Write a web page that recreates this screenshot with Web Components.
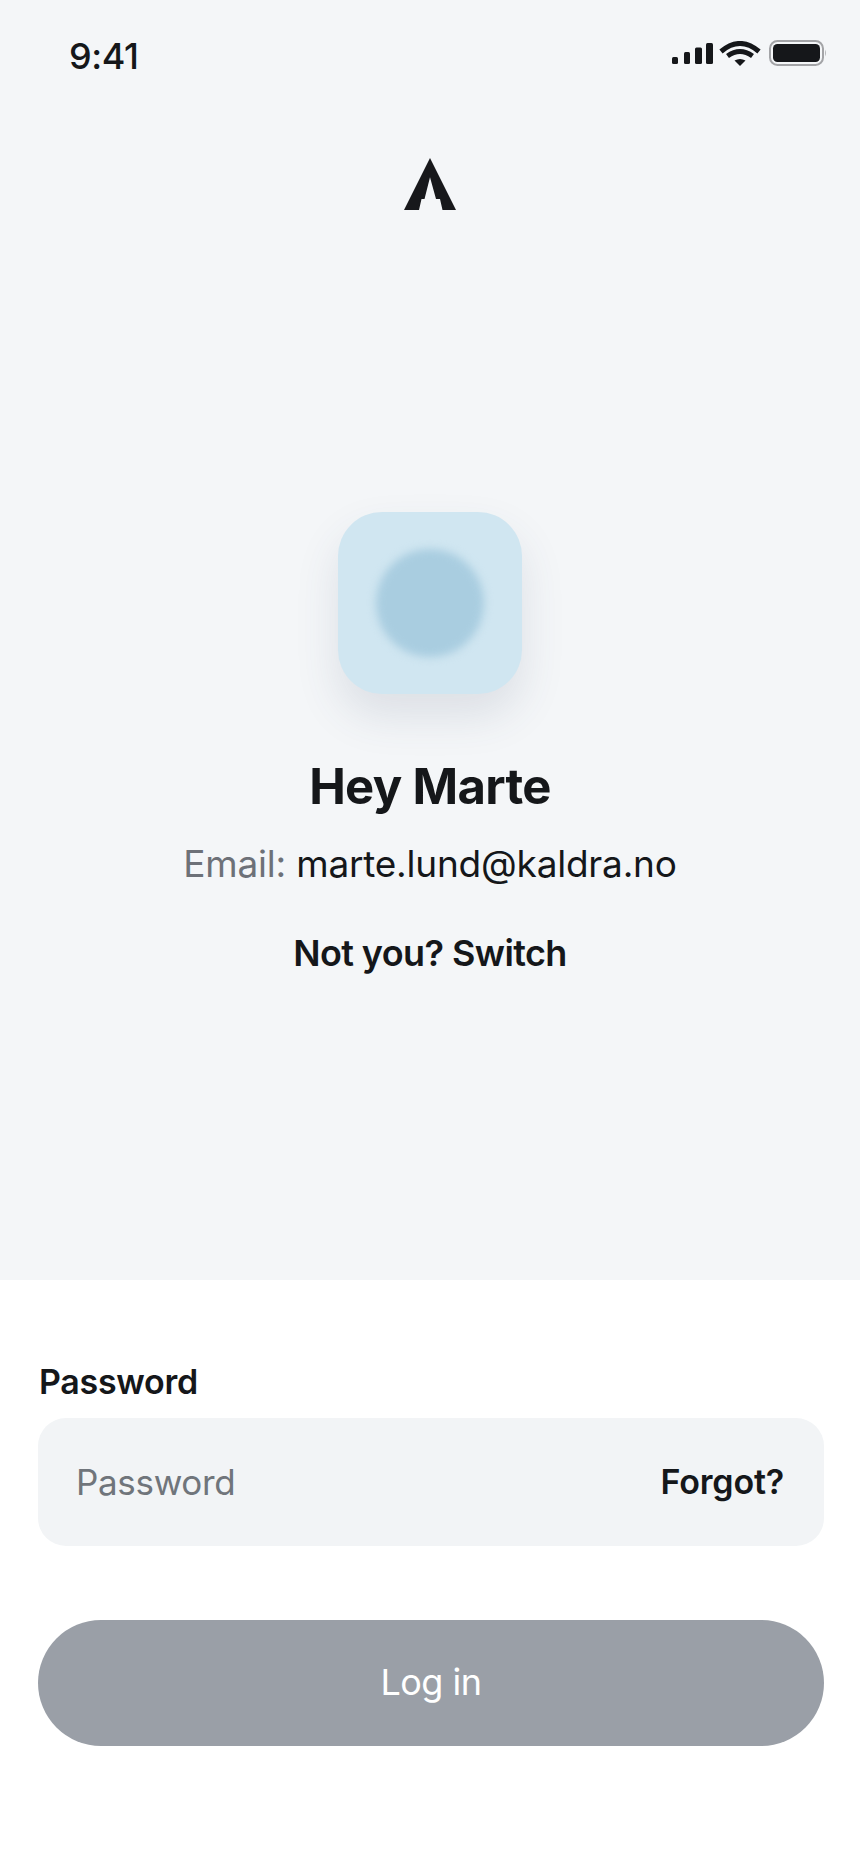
<!DOCTYPE html>
<html lang="en"><head><meta charset="utf-8"><title>Log in</title>
<style>
html,body{margin:0;padding:0;background:#fff}
body{font-family:Inter,"Noto Sans",sans-serif;color:#15171a}
</style></head><body>
<login-screen>
  <status-bar slot="top"></status-bar>
  <brand-mark slot="top"></brand-mark>
  <user-card slot="top" name="Hey Marte" email="marte.lund@kaldra.no"></user-card>
  <password-field slot="form"></password-field>
  <primary-button slot="form">Log in</primary-button>
</login-screen>
<script>
function def(name, html, init){
  customElements.define(name, class extends HTMLElement{
    constructor(){super();const t=document.createElement('template');t.innerHTML=html;this.attachShadow({mode:'open'}).appendChild(t.content.cloneNode(true));}
    connectedCallback(){ if(init) init(this,this.shadowRoot); }
  });
}
def('login-screen',`<style>
:host{display:flex;flex-direction:column;width:860px;height:1864px;overflow:hidden}
.top{height:1280px;background:#f4f6f8;display:flex;flex-direction:column;align-items:stretch;flex:none}
.form{flex:1;background:#fff;padding:0 36px 0 38px;display:flex;flex-direction:column}
</style><div class="top"><slot name="top"></slot></div><div class="form"><slot name="form"></slot></div>`);

def('status-bar',`<style>
:host{display:flex;justify-content:space-between;align-items:center;height:26px;padding:40px 33px 0 69px}
.t{font:500 36px/32px Inter,sans-serif;letter-spacing:-.4px;color:#15171a;margin-top:6px}
.i{display:flex;align-items:center}
svg{display:block}
.sig{margin-right:6px}.wifi{margin-right:8px}
</style><span class="t">9:41</span><span class="i">
<svg class="sig" width="41" height="21" viewBox="0 0 41 21" fill="#15171a"><rect x="0" y="14" width="6" height="7" rx="1.500"/><rect x="12" y="9" width="6" height="12" rx="1.500"/><rect x="23" y="4.500" width="7" height="16.500" rx="1.500"/><rect x="34" y="0" width="7" height="21" rx="1.500"/></svg>
<svg class="wifi" width="42" height="25" viewBox="0 0 42 25" fill="none"><path d="M2 10.500Q21-5.500 40 10.500" stroke="#15171a" stroke-width="5"/><path d="M8.500 15Q21 6 33.500 15" stroke="#15171a" stroke-width="5"/><path d="M15.500 19.500Q21 16.500 26.500 19.500L21 25Z" fill="#15171a"/></svg>
<svg width="58" height="26" viewBox="0 0 58 26"><rect x="1" y="1" width="53" height="24" rx="7.500" fill="none" stroke="#a3a4a7" stroke-width="2"/><rect x="4" y="4" width="47" height="18" rx="4.500" fill="#15171a"/><path d="M56 9.500q2 3.500 0 7z" fill="#b5b6b9"/></svg>
</span>`);

def('brand-mark',`<style>
:host{display:block;margin-top:92px;height:52px}
svg{display:block;margin:0 auto}
</style><svg width="52" height="52" viewBox="0 0 52 52"><path fill="#17181b" d="M26 0L52 52H38.500L36 41H32L26 19.300L20.500 41H17.500L15 52H0Z"/></svg>`);

def('user-card',`<style>
:host{display:flex;flex-direction:column;align-items:center;margin-top:302px;text-align:center}
.tile{width:184px;height:182px;border-radius:44px;background:#d0e6f1;box-shadow:0 22px 44px rgba(60,80,110,.13);display:flex;align-items:center;justify-content:center}
.dot{width:108px;height:108px;border-radius:50%;background:#a9cde0;filter:blur(4px)}
h1{margin:65px 0 0;font:700 49px/56px Inter,sans-serif;letter-spacing:-.67px;color:#15171a}
.mail{margin-top:27px;font:400 37px/44px Inter,sans-serif;letter-spacing:-.22px;color:#15171a}
.mail span{color:#6d7178}
.sw{margin-top:45px;font:600 36px/44px Inter,sans-serif;letter-spacing:-.6px;color:#15171a}
</style><div class="tile"><div class="dot"></div></div><h1></h1><div class="mail"><span>Email:</span> <b style="font-weight:400"></b></div><div class="sw">Not you? Switch</div>`,
(h,s)=>{s.querySelector('h1').textContent=h.getAttribute('name');s.querySelector('b').textContent=h.getAttribute('email');});

def('password-field',`<style>
:host{display:block;margin-top:80px}
label{display:block;margin-left:1px;font:600 34px/44px Inter,sans-serif;letter-spacing:-.3px;color:#15171a}
.box{margin-top:14px;height:128px;border-radius:28px;background:#f2f4f6;display:flex;align-items:center;justify-content:space-between;padding:0 40px 0 38px;box-sizing:border-box}
.ph{font:400 35px/44px Inter,sans-serif;letter-spacing:-.33px;color:#70757b}
.fg{font:600 34px/44px Inter,sans-serif;letter-spacing:-.2px;color:#15171a}
</style><label>Password</label><div class="box"><span class="ph">Password</span><span class="fg">Forgot?</span></div>`);

def('primary-button',`<style>
:host{display:flex;align-items:center;justify-content:center;box-sizing:border-box;margin-top:74px;height:126px;padding-bottom:3px;border-radius:63px;background:#9a9fa7;color:#fff;font:400 36px/44px Inter,sans-serif;letter-spacing:-.5px}
</style><slot></slot>`);
</script>
</body></html>
